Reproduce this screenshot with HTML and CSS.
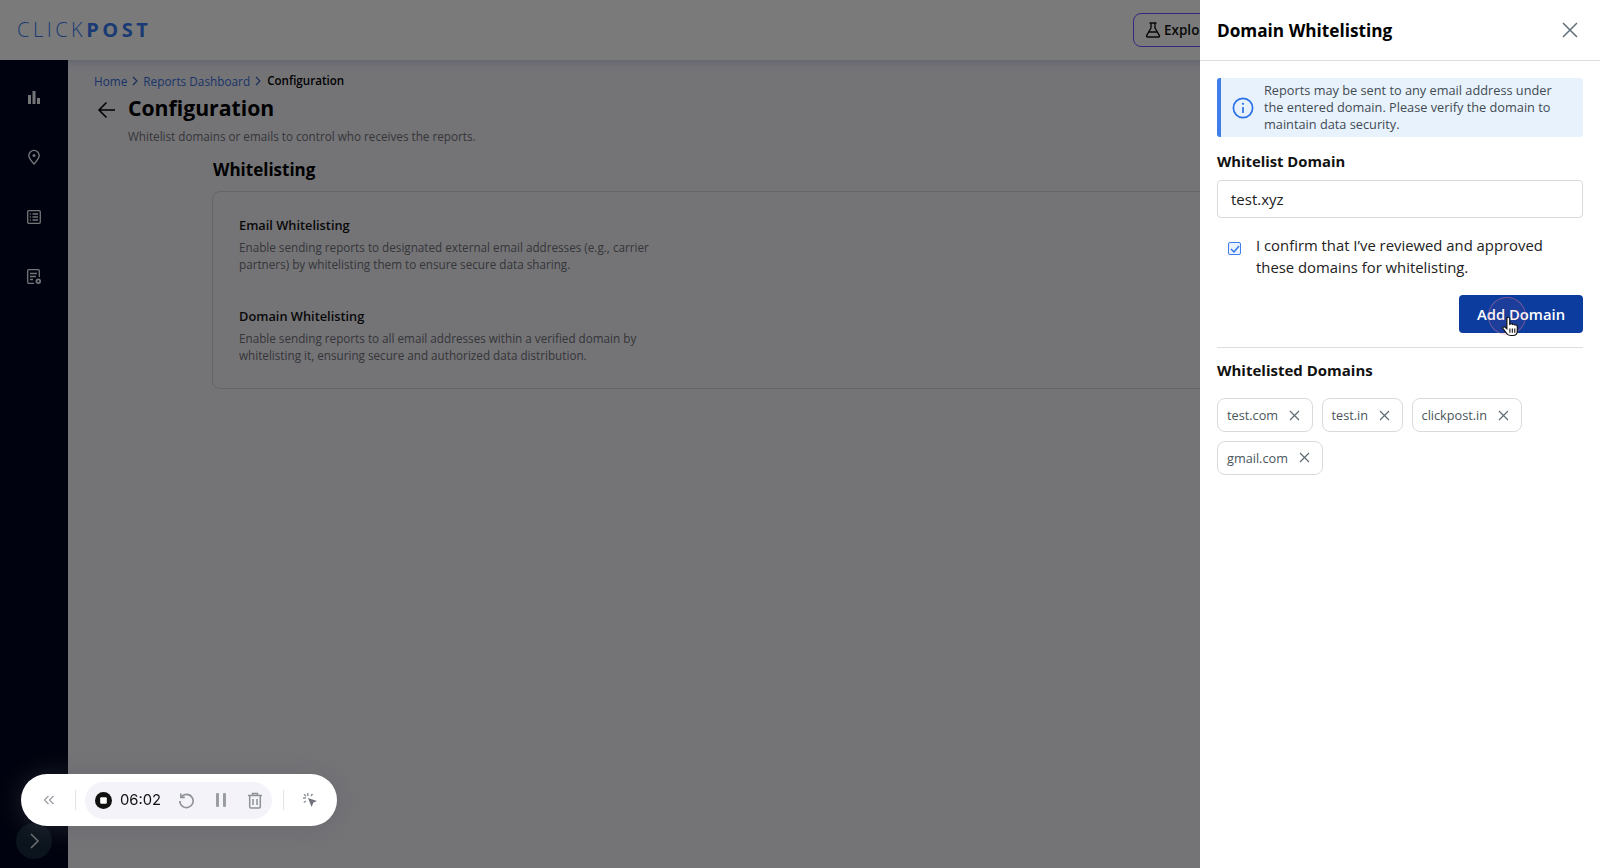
FILE: index.html
```html
<!DOCTYPE html>
<html lang="en">
<head>
<meta charset="utf-8">
<title>Domain Whitelisting</title>
<link rel="stylesheet" href="styles.css">
</head>
<body>
<div class="app">
  <header class="topbar">
    <div class="logo"><span class="logo-light">CLICK</span><span class="logo-bold">POST</span></div>
    <button class="explore">
      <svg width="18" height="18" viewBox="0 0 18 18" fill="none" stroke="#111" stroke-width="1.4" stroke-linejoin="round" stroke-linecap="round"><path d="M6 2h6M7 2v5L2.6 14.6A1 1 0 0 0 3.5 16h11a1 1 0 0 0 .9-1.4L11 7V2M5 11h8"/></svg>
      <span>Explore</span>
    </button>
  </header>
  <div class="body">
    <nav class="sidebar">
      <svg class="nav-icon" width="16" height="16" viewBox="0 0 16 16" fill="#e8eaee"><rect x="2" y="6" width="3" height="9"/><rect x="6.5" y="2" width="3" height="13"/><rect x="11" y="9" width="3" height="6"/></svg>
      <svg class="nav-icon" width="16" height="16" viewBox="0 0 16 16" fill="none" stroke="#e8eaee" stroke-width="1.4"><path d="M8 15C5 11.8 2.8 9.4 2.8 6.6a5.2 5.2 0 0 1 10.4 0C13.2 9.4 11 11.8 8 15Z"/><circle cx="8" cy="6.5" r="1.5" fill="#e8eaee" stroke="none"/></svg>
      <svg class="nav-icon" width="16" height="16" viewBox="0 0 16 16" fill="none" stroke="#e8eaee" stroke-width="1.3"><rect x="1.7" y="1.7" width="12.6" height="12.6" rx="1.2"/><path d="M6.5 5H12M6.5 8H12M6.5 11H12M3.8 5h1M3.8 8h1M3.8 11h1"/></svg>
      <svg class="nav-icon" width="16" height="16" viewBox="0 0 16 16" fill="none" stroke="#e8eaee" stroke-width="1.3"><path d="M8 14.3H2.7a1 1 0 0 1-1-1V1.700a1 1 0 0 1 1-1h9.600a1 1 0 0 1 1 1V8"/><path d="M4 4.500h7M4 7.500h6M4 10.500h3"/><circle cx="12.300" cy="12.300" r="2.700" fill="#e8eaee" stroke="none"/><circle cx="12.300" cy="12.300" r="1" fill="#00061e" stroke="none"/></svg>
      <button class="expand">
        <svg width="12" height="16" viewBox="0 0 12 16" fill="none" stroke="#d8dade" stroke-width="1.600"><path d="M3 1l7 7-7 7"/></svg>
      </button>
    </nav>
    <main class="content">
      <div class="crumbs">
        <a>Home</a>
        <svg class="crumb-sep" width="8" height="10" viewBox="0 0 8 10" fill="none" stroke="#2b58b0" stroke-width="1.100"><path d="M2 1l4 4-4 4"/></svg>
        <a>Reports Dashboard</a>
        <svg class="crumb-sep" width="8" height="10" viewBox="0 0 8 10" fill="none" stroke="#2b58b0" stroke-width="1.100"><path d="M2 1l4 4-4 4"/></svg>
        <span class="crumb-current">Configuration</span>
      </div>
      <div class="title-row">
        <svg class="back" width="20" height="18" viewBox="0 0 20 18" fill="none" stroke="#000" stroke-width="1.500"><path d="M18 9H2M9.500 1.500 2 9l7.500 7.500"/></svg>
        <div>
          <h1>Configuration</h1>
          <p class="subtitle">Whitelist domains or emails to control who receives the reports.</p>
        </div>
      </div>
      <section class="section">
        <h2>Whitelisting</h2>
        <div class="card">
          <div class="card-item">
            <h3>Email Whitelisting</h3>
            <p>Enable sending reports to designated external email addresses (e.g., carrier partners) by whitelisting them to ensure secure data sharing.</p>
          </div>
          <div class="card-item">
            <h3>Domain Whitelisting</h3>
            <p>Enable sending reports to all email addresses within a verified domain by whitelisting it, ensuring secure and authorized data distribution.</p>
          </div>
        </div>
      </section>
    </main>
  </div>
</div>

<div class="overlay"></div>

<aside class="panel">
  <div class="panel-head">
    <h2>Domain Whitelisting</h2>
    <svg width="16" height="16" viewBox="0 0 16 16" fill="none" stroke="#5f7079" stroke-width="1.500"><path d="M1 1l14 14M15 1 1 15"/></svg>
  </div>
  <div class="panel-body">
    <div class="info">
      <svg width="22" height="22" viewBox="0 0 22 22" fill="none" stroke="#2a72e6" stroke-width="1.700"><circle cx="11" cy="11" r="9.600"/><path d="M11 10v6"/><circle cx="11" cy="6.800" r="1.100" fill="#2a72e6" stroke="none"/></svg>
      <p>Reports may be sent to any email address under the entered domain. Please verify the domain to maintain data security.</p>
    </div>
    <label class="field-label">Whitelist Domain</label>
    <div class="input">test.xyz</div>
    <div class="confirm">
      <span class="check"><svg width="10" height="8" viewBox="0 0 10 8" fill="none" stroke="#2a72e6" stroke-width="1.400"><path d="M1 4l3 3 5-6"/></svg></span>
      <span>I confirm that I’ve reviewed and approved these domains for whitelisting.</span>
    </div>
    <div class="actions">
      <button class="primary">Add Domain
        <span class="click-ring"></span>
        <svg class="hand" width="17" height="20" viewBox="0 0 14 19" preserveAspectRatio="none"><path d="M4 1.500a1.200 1.200 0 0 1 2.400 0V7l.6-.3a1.200 1.200 0 0 1 1.800.5l.5-.2a1.100 1.100 0 0 1 1.500.7l.4-.1c.9-.1 1.400.5 1.400 1.300v4.600c0 2.300-1.500 4-3.700 4H7c-1.600 0-2.600-.8-3.300-2L.8 11c-.6-1 .6-2.200 1.600-1.300L4 11.200Z" fill="#fff" stroke="#111" stroke-width="1"/><path d="M6.500 11v4M8.500 11v4M10.500 11v4" stroke="#111" stroke-width=".9"/></svg>
      </button>
    </div>
    <hr class="rule">
    <h3 class="list-title">Whitelisted Domains</h3>
    <div class="chips">
      <span class="chip">test.com<svg width="11" height="11" viewBox="0 0 11 11" fill="none" stroke="#5f6b72" stroke-width="1.200"><path d="M1 1l9 9M10 1l-9 9"/></svg></span>
      <span class="chip">test.in<svg width="11" height="11" viewBox="0 0 11 11" fill="none" stroke="#5f6b72" stroke-width="1.200"><path d="M1 1l9 9M10 1l-9 9"/></svg></span>
      <span class="chip">clickpost.in<svg width="11" height="11" viewBox="0 0 11 11" fill="none" stroke="#5f6b72" stroke-width="1.200"><path d="M1 1l9 9M10 1l-9 9"/></svg></span>
      <span class="chip">gmail.com<svg width="11" height="11" viewBox="0 0 11 11" fill="none" stroke="#5f6b72" stroke-width="1.200"><path d="M1 1l9 9M10 1l-9 9"/></svg></span>
    </div>
  </div>
</aside>

<div class="recorder">
  <svg class="rec-collapse" width="12" height="10" viewBox="0 0 12 10" fill="none" stroke="#9a9ea6" stroke-width="1.300"><path d="M5.500 1 1.500 5l4 4M10.500 1l-4 4 4 4"/></svg>
  <span class="rec-divider"></span>
  <div class="rec-group">
    <svg width="17" height="17" viewBox="0 0 18 18"><circle cx="9" cy="9" r="9" fill="#111"/><rect x="5.500" y="5.500" width="7" height="7" rx="1.200" fill="#fff"/></svg>
    <span class="rec-time">06:02</span>
    <svg class="rec-replay" width="17" height="17" viewBox="0 0 18 18" fill="none" stroke="#8e9198" stroke-width="1.700"><path d="M3.500 5.200A7 7 0 1 1 2 9.500"/><path d="M3 1.500v4.200h4.200"/></svg>
    <svg class="rec-pause" width="12" height="16" viewBox="0 0 12 16" fill="#9a9da4"><rect x="1" y="1" width="3" height="14" rx="1"/><rect x="8" y="1" width="3" height="14" rx="1"/></svg>
    <svg class="rec-trash" width="16" height="17" viewBox="0 0 16 17" fill="none" stroke="#8e9198" stroke-width="1.500"><path d="M1 3.500h14M5.500 3.500V1.500h5v2M2.700 3.500v11.300a1.200 1.200 0 0 0 1.200 1.200h8.200a1.200 1.200 0 0 0 1.200-1.200V3.500M6 7v6M10 7v6"/></svg>
  </div>
  <span class="rec-divider rec-divider-end"></span>
  <svg class="rec-click" width="16" height="16" viewBox="0 0 16 16" fill="none"><path d="M6 6l9 3-3.600 1.500L9.600 15Z" fill="#6f7279"/><path d="M5.800 1v3M1 6h3M2 2.200l2 2M10.500 1.800 9 4M1.800 10.500 4 9" stroke="#8e9198" stroke-width="1.400"/></svg>
</div>
</body>
</html>
```
FILE: styles.css
```css
* { box-sizing: border-box; }

html, body {
  margin: 0;
  height: 100%;
  overflow: hidden;
}

body {
  font-family: "Open Sans", "Noto Sans", sans-serif;
  color: #000;
  background: #e8e8ef;
}

h1, h2, h3, p { margin: 0; }

.app {
  display: flex;
  flex-direction: column;
  height: 868px;
}

.topbar {
  height: 60px;
  flex: none;
  display: flex;
  align-items: center;
  justify-content: space-between;
  padding: 0 0 0 17px;
  background: #f4f4f5;
  box-shadow: 0 2px 8px rgba(90, 90, 180, 0.25);
  position: relative;
}

.logo {
  font-size: 20px;
  letter-spacing: 3.5px;
  color: #3474e8;
  line-height: 1;
  padding-bottom: 1px;
}

.logo-light { font-weight: 300; }
.logo-bold { font-weight: 700; }

.explore {
  width: 150px;
  height: 34px;
  margin-right: 317px;
  display: flex;
  align-items: center;
  gap: 2px;
  padding: 0 10px;
  background: transparent;
  border: 1.5px solid #6a50ff;
  border-radius: 8px;
  font: 600 13.5px "Open Sans", sans-serif;
  color: #111;
}

.body {
  flex: 1;
  display: flex;
  min-height: 0;
}

.sidebar {
  width: 68px;
  flex: none;
  background: #00061e;
  display: flex;
  flex-direction: column;
  align-items: center;
  padding-top: 29px;
  gap: 44px;
  position: relative;
}

.expand {
  position: absolute;
  left: 16px;
  bottom: 9px;
  width: 36px;
  height: 36px;
  border: 0;
  padding: 0;
  border-radius: 50%;
  background: #16263a;
  display: flex;
  align-items: center;
  justify-content: center;
}

.content {
  flex: 1;
  padding: 12px 0 0 26px;
  min-width: 0;
}

.crumbs {
  display: flex;
  align-items: center;
  gap: 4px;
  height: 17px;
  font-size: 11.8px;
}

.crumbs a { color: #3568cf; }
.crumb-current { color: #000; font-weight: 600; margin-left: 1px; font-size: 11.6px; }

.title-row {
  display: flex;
  gap: 11px;
  margin-top: 4px;
}

.back { margin: 8px 0 0 3px; flex: none; }

h1 {
  font-size: 21.2px;
  font-weight: 700;
  line-height: 30px;
}

.subtitle {
  font-size: 11.7px;
  line-height: 17px;
  margin-top: 5px;
  color: #6c6c72;
}

.section {
  margin: 13px 0 0 119px;
}

.section h2 {
  font-size: 17px;
  font-weight: 700;
  line-height: 24px;
}

.card {
  margin: 9px 0 0 -1px;
  height: 198px;
  width: 1100px;
  padding: 24px 26px 0;
  border: 1px solid #c8cad2;
  border-radius: 8px;
}

.card-item + .card-item { margin-top: 34px; }

.card-item h3 {
  font-size: 12.8px;
  font-weight: 600;
  line-height: 18px;
  color: #111;
}

.card-item p {
  width: 430px;
  margin-top: 5px;
  font-size: 11.7px;
  line-height: 17px;
  color: #6c6c72;
}

.overlay {
  position: fixed;
  inset: 0;
  background: rgba(0, 0, 0, 0.5);
}

.panel {
  position: fixed;
  top: 0;
  right: 0;
  width: 400px;
  height: 868px;
  background: #fff;
}

.panel-head {
  height: 61px;
  display: flex;
  align-items: center;
  justify-content: space-between;
  padding: 0 22px 0 17px;
  border-bottom: 1px solid #dcdee0;
}

.panel-head h2 {
  font-size: 17.2px;
  font-weight: 700;
}

.panel-body {
  padding: 17px 17px 0;
}

.info {
  height: 59px;
  display: flex;
  align-items: center;
  gap: 10px;
  padding-left: 11px;
  background: #e8f2fd;
  border-left: 4px solid #3f7ee8;
  border-radius: 3px;
}

.info svg { flex: none; }

.info p {
  font-size: 12.75px;
  line-height: 17px;
  color: #424b52;
  width: 305px;
}

.field-label {
  display: block;
  margin-top: 14px;
  font-size: 14.8px;
  font-weight: 700;
  line-height: 20px;
  color: #111;
}

.input {
  margin-top: 9px;
  height: 38px;
  display: flex;
  align-items: center;
  padding-left: 13px;
  font-size: 15px;
  color: #222;
  border: 1px solid #d8dadc;
  border-radius: 4px;
}

.confirm {
  display: flex;
  gap: 15px;
  margin-top: 17px;
  padding-left: 11px;
  font-size: 14.85px;
  line-height: 21.5px;
  color: #222;
}

.check {
  flex: none;
  width: 13px;
  height: 13px;
  margin-top: 7px;
  display: flex;
  align-items: center;
  justify-content: center;
  background: #eaf2fd;
  border: 1.5px solid #3f7ee8;
  border-radius: 2px;
}

.actions {
  display: flex;
  justify-content: flex-end;
  margin-top: 17px;
}

.primary {
  position: relative;
  width: 124px;
  height: 38px;
  border: 0;
  padding: 0;
  border-radius: 4px;
  background: #0b3c9e;
  color: #fff;
  font: 600 14.8px "Open Sans", sans-serif;
}

.click-ring {
  position: absolute;
  left: 29px;
  top: 2px;
  width: 38px;
  height: 38px;
  border-radius: 50%;
  border: 1.5px solid rgba(245, 130, 160, 0.4);
  background: rgba(230, 80, 120, 0.08);
}

.hand {
  position: absolute;
  left: 43px;
  top: 22px;
}

.rule {
  margin: 14px 0 0;
  border: 0;
  border-top: 1px solid #dcdee0;
}

.list-title {
  margin-top: 12px;
  font-size: 15px;
  font-weight: 700;
  line-height: 20px;
  color: #111;
}

.chips {
  display: flex;
  flex-wrap: wrap;
  gap: 8.5px;
  margin-top: 18px;
}

.chip {
  height: 34px;
  display: inline-flex;
  align-items: center;
  gap: 11px;
  padding: 0 12px 0 9px;
  font-size: 12.7px;
  color: #4a555c;
  background: #fff;
  border: 1px solid #d8dadc;
  border-radius: 8px;
}

.recorder {
  position: fixed;
  left: 21px;
  top: 774px;
  width: 316px;
  height: 52px;
  display: flex;
  align-items: center;
  padding-left: 22px;
  background: #fff;
  border-radius: 26px;
  box-shadow: 0 2px 24px 2px rgba(90, 90, 95, 0.3);
}

.rec-divider {
  flex: none;
  width: 1px;
  height: 20px;
  background: #e2e3e6;
  margin-left: 20px;
}

.rec-group {
  flex: none;
  width: 187px;
  height: 37px;
  margin-left: 9px;
  display: flex;
  align-items: center;
  padding-left: 10px;
  background: #f3f3f9;
  border-radius: 19px;
}

.rec-time {
  margin-left: 8px;
  font-family: "Inter", sans-serif;
  font-size: 14.8px;
  color: #111;
  width: 40px;
}

.rec-replay { margin-left: 18px; }
.rec-pause { margin-left: 20px; }
.rec-trash { margin-left: 20px; }

.rec-divider-end { margin-left: 11px; }

.rec-click { margin-left: 18px; }
```
